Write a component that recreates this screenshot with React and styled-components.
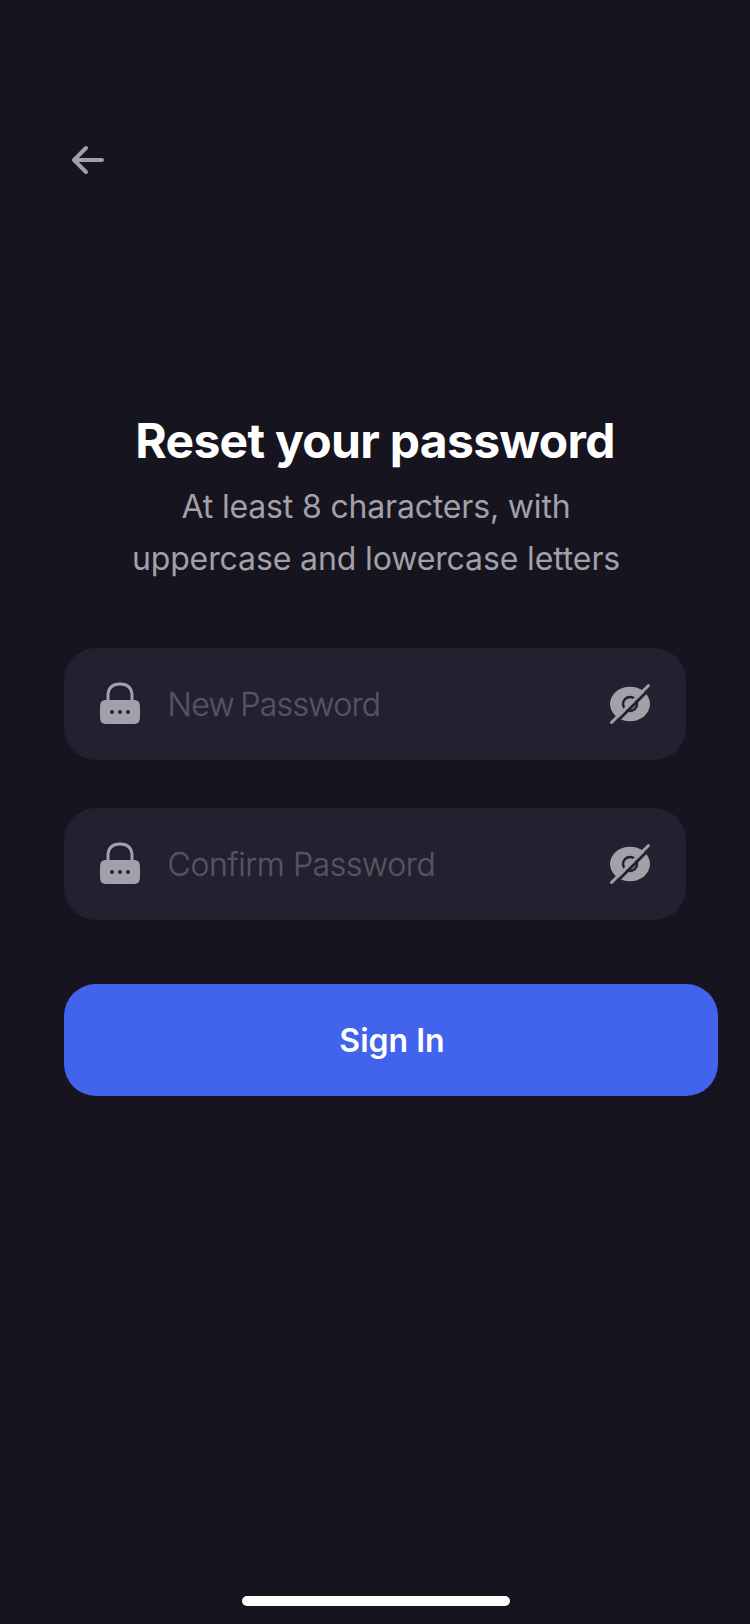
import React from "react";
import styled, { createGlobalStyle } from "styled-components";

const GlobalStyle = createGlobalStyle`
  * { box-sizing: border-box; }
  body {
    margin: 0;
    background: #16141f;
    font-family: Inter, "Liberation Sans", sans-serif;
    font-kerning: normal;
  }
`;

const Screen = styled.main`
  display: flex;
  flex-direction: column;
  width: 750px;
  height: 1624px;
  padding: 136px 64px 18px;
  overflow: hidden;
  background: #16141f;
`;

const BackButton = styled.button`
  display: flex;
  width: 48px;
  height: 48px;
  padding: 0;
  border: 0;
  background: none;
`;

const Heading = styled.header`
  margin-top: 224px;
  text-align: center;
`;

const Title = styled.h1`
  margin: 0;
  font-size: 48px;
  font-weight: 700;
  line-height: 66px;
  letter-spacing: -0.7px;
  color: #fff;
  white-space: nowrap;
`;

const Hint = styled.p`
  margin: 7px 0 0;
  padding-left: 2px;
  font-size: 32px;
  font-weight: 400;
  line-height: 52px;
  color: #a2a0a8;
  white-space: nowrap;
`;

const HintLine = styled.span`
  display: block;
  letter-spacing: ${(p) => p.$spacing};
`;

const Form = styled.section`
  display: flex;
  flex-direction: column;
  gap: 48px;
  margin-top: 63px;
`;

const Field = styled.div`
  display: flex;
  align-items: center;
  height: 112px;
  padding: 0 32px;
  border-radius: 32px;
  background: #222132;
`;

const Placeholder = styled.span`
  flex: 1;
  margin-left: 23.5px;
  padding-top: 2px;
  font-size: 32px;
  font-weight: 300;
  line-height: 44px;
  letter-spacing: ${(p) => p.$spacing};
  word-spacing: ${(p) => p.$wordSpacing};
  color: #56555c;
  -webkit-text-stroke: 0.3px #56555c;
  white-space: nowrap;
`;

const SubmitButton = styled.button`
  width: 654px;
  height: 112px;
  margin-top: 64px;
  padding: 2px 0 0 2px;
  flex-shrink: 0;
  border: 0;
  border-radius: 32px;
  background: #4263eb;
  font-family: inherit;
  font-size: 32px;
  font-weight: 600;
  line-height: 44px;
  color: #fff;
`;

const HomeIndicator = styled.div`
  width: 268px;
  height: 10px;
  margin: auto 0 0 178px;
  border-radius: 5px;
  background: #fff;
`;

const Icon = styled.svg`
  display: block;
  flex: none;
  width: 48px;
  height: 48px;
`;

const ArrowIcon = () => (
  <Icon viewBox="0 0 48 48" fill="none" stroke="#a2a0a8" strokeWidth="4" strokeLinecap="round" strokeLinejoin="round">
    <path d="M38 24H10M22 12L10 24l12 12" />
  </Icon>
);

const LockIcon = () => (
  <Icon viewBox="0 0 48 48" fill="none">
    <path d="M12 21v-5c0-8 4-12 12-12S36 8 36 16v5" stroke="#a2a0a8" strokeWidth="3" />
    <path d="M12 20h24c6.5 0 8 1.5 8 8v8c0 6.5-1.5 8-8 8H12c-6.5 0-8-1.5-8-8v-8c0-6.5 1.5-8 8-8Z" fill="#a2a0a8" />
    <g fill="#222132">
      <circle cx="16" cy="32" r="2" />
      <circle cx="24" cy="32" r="2" />
      <circle cx="32" cy="32" r="2" />
    </g>
  </Icon>
);

const EyeOffIcon = () => (
  <Icon viewBox="0 0 48 48" fill="none">
    <ellipse cx="24" cy="24" rx="20" ry="17.2" fill="#a2a0a8" />
    <circle cx="24" cy="24" r="7" stroke="#222132" strokeWidth="2.5" />
    <path d="M8 44.5L46 6.5" stroke="#222132" strokeWidth="3" />
    <path d="M5.5 42.5L42.5 5.5" stroke="#a2a0a8" strokeWidth="3" strokeLinecap="round" />
  </Icon>
);

const PasswordField = ({ text, spacing, wordSpacing }) => (
  <Field>
    <LockIcon />
    <Placeholder $spacing={spacing} $wordSpacing={wordSpacing}>{text}</Placeholder>
    <EyeOffIcon />
  </Field>
);

export default function App() {
  return (
    <>
      <GlobalStyle />
      <Screen>
        <BackButton aria-label="Back"><ArrowIcon /></BackButton>
        <Heading>
          <Title>Reset your password</Title>
          <Hint>
            <HintLine $spacing="-0.17px">At least 8 characters, with</HintLine>
            <HintLine $spacing="-0.12px">uppercase and lowercase letters</HintLine>
          </Hint>
        </Heading>
        <Form>
          <PasswordField text="New Password" spacing="-0.65px" wordSpacing="-2px" />
          <PasswordField text="Confirm Password" spacing="-0.37px" wordSpacing="0" />
        </Form>
        <SubmitButton>Sign In</SubmitButton>
        <HomeIndicator />
      </Screen>
    </>
  );
}
